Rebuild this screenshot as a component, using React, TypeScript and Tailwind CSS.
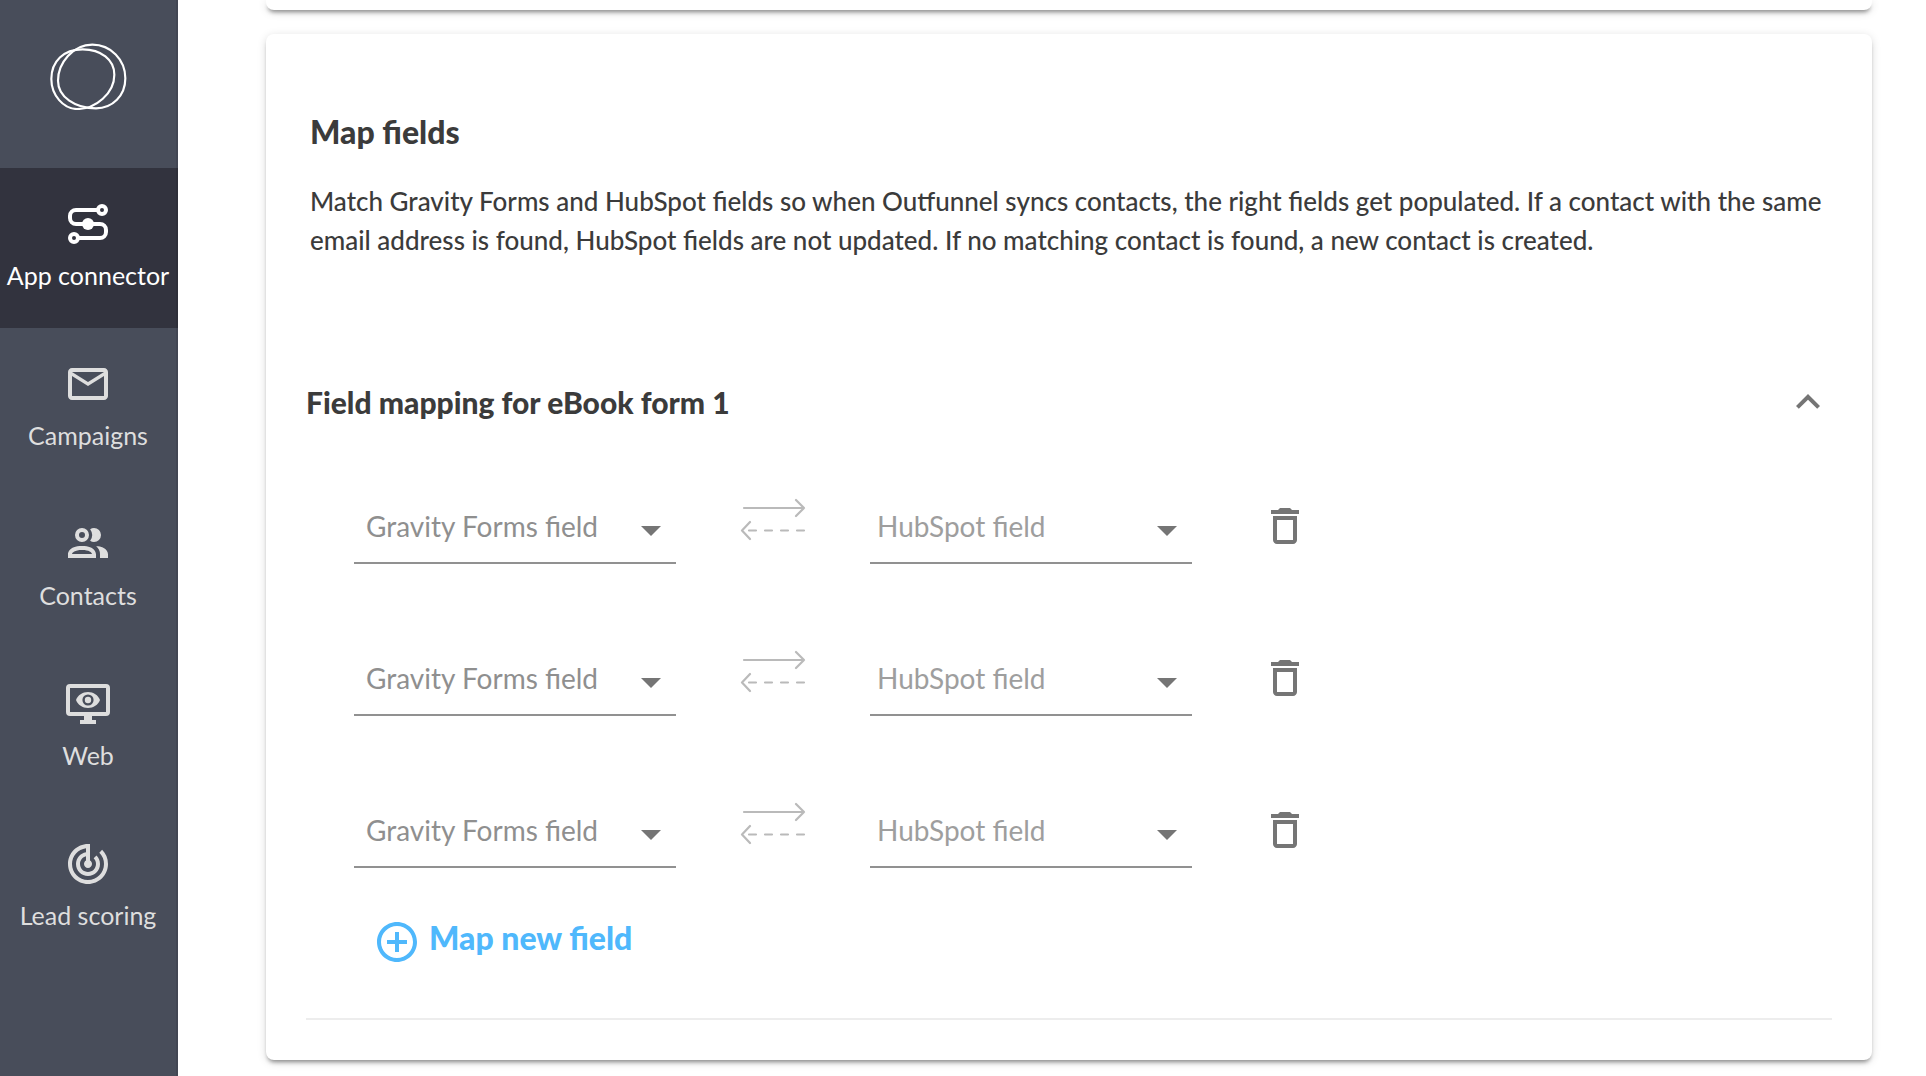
import React, { useState } from "react";
import {
  MdAddCircleOutline,
  MdArrowDropDown,
  MdDeleteOutline,
  MdExpandLess,
  MdMailOutline,
  MdTrackChanges,
} from "react-icons/md";

const Logo: React.FC = () => (
  <svg
    className="w-[77px] h-[67px]"
    viewBox="149 130 231 201"
    fill="none"
    stroke="#fff"
    strokeWidth="6.5"
  >
    <path d="M276 135C331 135 375 180 375 236C375 288 337 326 287 326C225 326 173 292 173 243C173 190 218 135 276 135Z" />
    <path d="M153 238C153 184 190 149 247 149C302 149 342 180 342 225C342 280 287 328 230 328C190 328 153 287 153 238Z" />
  </svg>
);

const ConnectorIcon: React.FC = () => (
  <svg
    className="size-12"
    viewBox="0 0 24 24"
    fill="none"
    stroke="currentColor"
    strokeWidth="2"
  >
    <circle cx="19" cy="5" r="2" />
    <circle cx="5" cy="19" r="2" />
    <circle cx="12" cy="12" r="3" fill="currentColor" stroke="none" />
    <path d="M17 5H6a3 3 0 0 0-3 3v1a3 3 0 0 0 3 3h12a3 3 0 0 1 3 3v1a3 3 0 0 1-3 3H7" />
  </svg>
);

const ContactsIcon: React.FC = () => (
  <svg className="size-12" viewBox="0 0 24 24" fill="currentColor">
    <path d="M13.07 10.41A5 5 0 0 0 13.07 4.59A3.39 3.39 0 0 1 15 4A3.5 3.5 0 0 1 15 11A3.39 3.39 0 0 1 13.07 10.41M5.5 7.5A3.5 3.5 0 1 1 9 11A3.5 3.5 0 0 1 5.5 7.5M7.5 7.5A1.5 1.5 0 1 0 9 6A1.5 1.5 0 0 0 7.5 7.5M16 17V19H2V17S2 13 9 13 16 17 16 17M14 17C13.86 16.22 12.67 15 9 15S4.07 16.31 4 17M15.95 13A5.32 5.32 0 0 1 18 17V19H22V17S22 13.37 15.94 13Z" />
  </svg>
);

const WebIcon: React.FC = () => (
  <svg className="size-12" viewBox="0 0 24 24" fill="currentColor">
    <path
      fillRule="evenodd"
      d="M3 2h18a2 2 0 0 1 2 2v12a2 2 0 0 1-2 2h-7v2h2v2H8v-2h2v-2H3a2 2 0 0 1-2-2V4a2 2 0 0 1 2-2zM3 4v12h18V4z"
    />
    <path
      fillRule="evenodd"
      d="M12 6c-2.7 0-5.1 1.6-6 4 .9 2.4 3.3 4 6 4s5.1-1.6 6-4c-.9-2.4-3.3-4-6-4zM12 7.2a2.8 2.8 0 1 1 0 5.6 2.8 2.8 0 0 1 0-5.6z"
    />
    <circle cx="12" cy="10" r="1.6" />
  </svg>
);

const SyncArrows: React.FC = () => (
  <svg
    className="w-[66px] h-11 shrink-0"
    viewBox="0 0 66 44"
    fill="none"
    stroke="#bababa"
    strokeWidth="2.2"
    strokeLinecap="round"
    strokeLinejoin="round"
  >
    <path d="M4 10H64M56 2L64 10L56 18" />
    <path d="M10 24L2 32.5L10 41M9 32.5H16M25 32.5H32M41 32.5H48M57 32.5H64" />
  </svg>
);

const navItems = [
  { label: "App connector", icon: <ConnectorIcon />, active: true },
  { label: "Campaigns", icon: <MdMailOutline className="size-12" /> },
  { label: "Contacts", icon: <ContactsIcon /> },
  { label: "Web", icon: <WebIcon /> },
  { label: "Lead scoring", icon: <MdTrackChanges className="size-12" /> },
];

const Sidebar: React.FC = () => (
  <aside className="w-[178px] shrink-0 bg-[#484d5a] border-r-2 border-[#424653]">
    <a href="#" aria-label="Home" className="flex justify-center h-[168px] pt-[43px]">
      <Logo />
    </a>
    <nav>
      {navItems.map((item) => (
        <a
          key={item.label}
          href="#"
          className={
            item.active
              ? "flex flex-col items-center h-40 pt-8 gap-[11px] -mr-0.5 border-r-2 border-[#2e2f39] bg-[#32333e] text-white"
              : "flex flex-col items-center h-40 pt-8 gap-[11px] text-[#dedede]"
          }
        >
          {item.icon}
          <span className="text-[25px] leading-8 whitespace-nowrap">
            {item.label}
          </span>
        </a>
      ))}
    </nav>
  </aside>
);

interface FieldSelectProps {
  label: string;
  className: string;
}

const FieldSelect: React.FC<FieldSelectProps> = ({ label, className }) => (
  <div className="relative w-[322px] h-[66px] border-b-2 border-[#919191]">
    <select
      aria-label={label}
      className={`appearance-none w-full h-full pb-2 text-[28px] outline-none ${className}`}
    >
      <option>{label}</option>
    </select>
    <MdArrowDropDown className="absolute right-px top-2 size-12 text-[#757575] pointer-events-none" />
  </div>
);

const App: React.FC = () => {
  const [rows, setRows] = useState([1, 2, 3]);
  const [open, setOpen] = useState(true);

  return (
    <div className="flex min-h-screen bg-white text-[#3b3b3b] font-['Lato',sans-serif]">
      <Sidebar />
      <main className="flex-1 min-w-0 flex flex-col gap-6 pl-[88px] pr-[54px] pb-4">
        <div className="h-[10px] rounded-b-lg bg-white shadow-[0_4px_4px_-2px_rgba(0,0,0,0.4),0_2px_10px_rgba(0,0,0,0.14)]" />
        <section className="px-10 pt-20 pb-10 rounded-lg bg-white shadow-[0_4px_4px_-2px_rgba(0,0,0,0.4),0_2px_10px_rgba(0,0,0,0.14)]">
          <div className="pl-1 -mr-4">
            <h1 className="text-[32px] leading-9 font-black">Map fields</h1>
            <p className="mt-8 text-[26px] leading-[39px] font-medium">
              Match Gravity Forms and HubSpot fields so when Outfunnel syncs
              contacts, the right fields get populated. If a contact with the
              same email address is found, HubSpot fields are not updated. If no
              matching contact is found, a new contact is created.
            </p>
          </div>
          <div className="flex items-center justify-between mt-[118px]">
            <h2 className="text-[30px] leading-9 font-black">
              Field mapping for eBook form 1
            </h2>
            <button aria-label="Toggle field mapping" onClick={() => setOpen(!open)}>
              <MdExpandLess className="size-12 text-[#757575]" />
            </button>
          </div>
          {open && (
            <div className="pl-12 pt-[72px] pb-[52px] border-b-2 border-[#ededed]">
              <div className="flex flex-col gap-[86px]">
                {rows.map((row) => (
                  <div key={row} className="flex items-start gap-16">
                    <FieldSelect label="Gravity Forms field" className="pl-3 text-[#8f8f8f]" />
                    <SyncArrows />
                    <FieldSelect label="HubSpot field" className="pl-[7px] text-[#9e9e9e]" />
                    <button
                      aria-label="Delete mapping"
                      className="flex items-center justify-center w-[58px] h-14"
                      onClick={() => setRows(rows.filter((r) => r !== row))}
                    >
                      <MdDeleteOutline className="size-12 text-[#757575]" />
                    </button>
                  </div>
                ))}
              </div>
              <button
                className="flex items-center gap-2 mt-[50px] ml-[19px] text-[32px] leading-9 font-black text-[#4fb8fc]"
                onClick={() => setRows([...rows, Date.now()])}
              >
                <MdAddCircleOutline className="size-12" />
                <span className="pb-2">Map new field</span>
              </button>
            </div>
          )}
        </section>
      </main>
    </div>
  );
};

export default App;
